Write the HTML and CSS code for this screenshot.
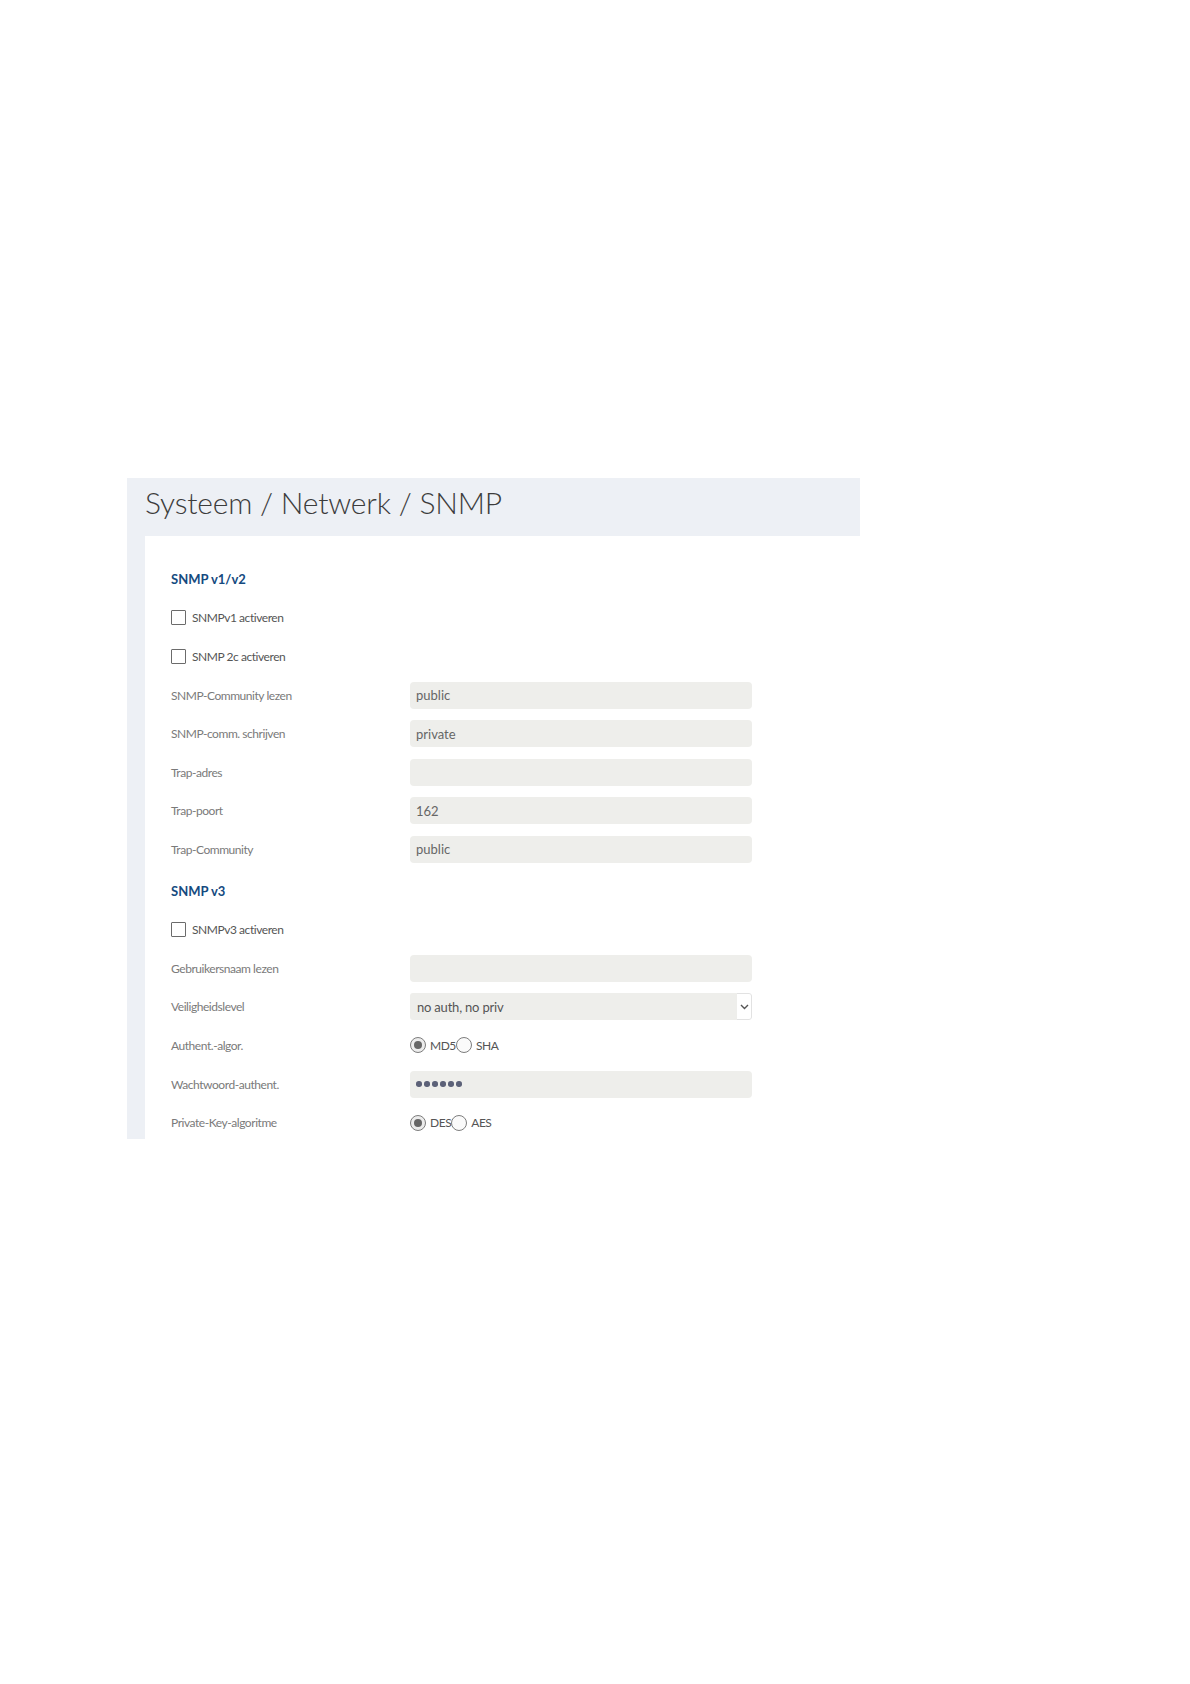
FILE: index.html
```html
<!doctype html>
<html>
  <head>
    <meta name="viewport" content="width=device-width,initial-scale=1.0" />
    <title>Systeem / Netwerk / SNMP</title>
    <link rel="stylesheet" href="styles.css">
  </head>
  <body>
    <div class="frame">
      <div class="page-head">
        <h1>Systeem / Netwerk / SNMP</h1>
      </div>
      <div class="page-body">
        <form class="card" action="">
          <h2 class="section-title">SNMP v1/v2</h2>
          <label class="row check-row"><input type="checkbox" />SNMPv1 activeren</label>
          <label class="row check-row"><input type="checkbox" />SNMP 2c activeren</label>
          <div class="row">
            <span class="field-label">SNMP-Community lezen</span>
            <input class="field" value="public" />
          </div>
          <div class="row">
            <span class="field-label">SNMP-comm. schrijven</span>
            <input class="field" value="private" />
          </div>
          <div class="row">
            <span class="field-label">Trap-adres</span>
            <input class="field" value="" />
          </div>
          <div class="row">
            <span class="field-label">Trap-poort</span>
            <input class="field" value="162" />
          </div>
          <div class="row">
            <span class="field-label">Trap-Community</span>
            <input class="field" value="public" />
          </div>

          <h2 class="section-title second">SNMP v3</h2>
          <label class="row check-row"><input type="checkbox" />SNMPv3 activeren</label>
          <div class="row">
            <span class="field-label">Gebruikersnaam lezen</span>
            <input class="field" value="" />
          </div>
          <div class="row">
            <span class="field-label">Veiligheidslevel</span>
            <div class="select">
              <span class="select-value">no auth, no priv</span>
              <span class="select-arrow">
                <svg width="9" height="6" viewBox="0 0 9 6"><path d="M1 1l3.5 3.5L8 1" fill="none" stroke="#555" stroke-width="1.4"/></svg>
              </span>
            </div>
          </div>
          <div class="row">
            <span class="field-label">Authent.-algor.</span>
            <div class="radios">
              <label><input type="radio" name="auth" checked />MD5</label>
              <label><input type="radio" name="auth" />SHA</label>
            </div>
          </div>
          <div class="row">
            <span class="field-label">Wachtwoord-authent.</span>
            <div class="field secret">
              <span></span><span></span><span></span><span></span><span></span><span></span>
            </div>
          </div>
          <div class="row">
            <span class="field-label">Private-Key-algoritme</span>
            <div class="radios">
              <label><input type="radio" name="priv" checked />DES</label>
              <label><input type="radio" name="priv" />AES</label>
            </div>
          </div>
        </form>
      </div>
    </div>
  </body>
</html>
```

FILE: styles.css
```css
body {
  margin: 0;
  padding: 478px 0 0 127px;
  background: #fff;
  font-family: Lato, 'Open Sans', sans-serif;
}

.frame {
  width: 733px;
  height: 661px;
  display: flex;
  flex-direction: column;
  overflow: hidden;
  background: #edf0f5;
}

.page-head {
  height: 58px;
  flex-shrink: 0;
  box-sizing: border-box;
  padding: 6px 18px 0;
}
.page-head h1 {
  margin: 0;
  font-size: 30px;
  line-height: 36px;
  font-weight: 300;
  letter-spacing: -0.2px;
  color: #3c3c3c;
}

.page-body {
  flex: 1;
  min-height: 0;
  padding-left: 18px;
  display: flex;
}

.card {
  flex: 1;
  background: #fff;
  margin: 0;
  padding: 24px 0 0 26px;
}

.section-title {
  margin: 0;
  height: 38.6px;
  display: flex;
  align-items: center;
  font-size: 13px;
  font-weight: 700;
  color: #154a80;
}
.section-title.second {
  margin-top: 3px;
}

.row {
  height: 38.6px;
  display: flex;
  align-items: center;
  font-size: 12px;
  letter-spacing: -0.45px;
}

.check-row {
  color: #555;
}
.check-row input {
  appearance: none;
  width: 15px;
  height: 15px;
  margin: 0 6px 0 0;
  border: 1px solid #6b6b6b;
  border-radius: 1px;
  background: #fff;
}

.field-label {
  width: 239px;
  flex-shrink: 0;
  color: #7a7a7a;
}

.field {
  width: 342px;
  height: 27px;
  box-sizing: border-box;
  border: none;
  border-radius: 4px;
  background: #eeeeeb;
  padding: 0 6px;
  font-family: Lato, 'Open Sans', sans-serif;
  font-size: 13px;
  letter-spacing: 0;
  color: #666;
  outline: none;
}

.secret {
  display: flex;
  align-items: center;
  gap: 2.5px;
}
.secret span {
  width: 5.5px;
  height: 5.5px;
  border-radius: 50%;
  background: #5c6178;
}

.select {
  width: 342px;
  height: 27px;
  display: flex;
  border-radius: 3px;
  overflow: hidden;
}
.select-value {
  flex: 1;
  display: flex;
  align-items: center;
  padding-left: 7px;
  background: #eeeeeb;
  font-size: 13px;
  letter-spacing: -0.2px;
  color: #555;
}
.select-arrow {
  width: 14px;
  display: flex;
  align-items: center;
  justify-content: center;
  border: 1px solid #e2e2e2;
  border-left: none;
  border-radius: 0 3px 3px 0;
  background: #fff;
}

.radios {
  display: flex;
  align-items: center;
  color: #555;
}
.radios label {
  display: flex;
  align-items: center;
}
.radios input {
  appearance: none;
  width: 16px;
  height: 16px;
  margin: 0 4px 0 0;
  border: 1px solid #7d7d7d;
  border-radius: 50%;
  background: #fafafa;
  display: flex;
  align-items: center;
  justify-content: center;
}
.radios input:checked {
  background: #ececec;
}
.radios input:checked::after {
  content: '';
  width: 8px;
  height: 8px;
  border-radius: 50%;
  background: #666;
}
```
